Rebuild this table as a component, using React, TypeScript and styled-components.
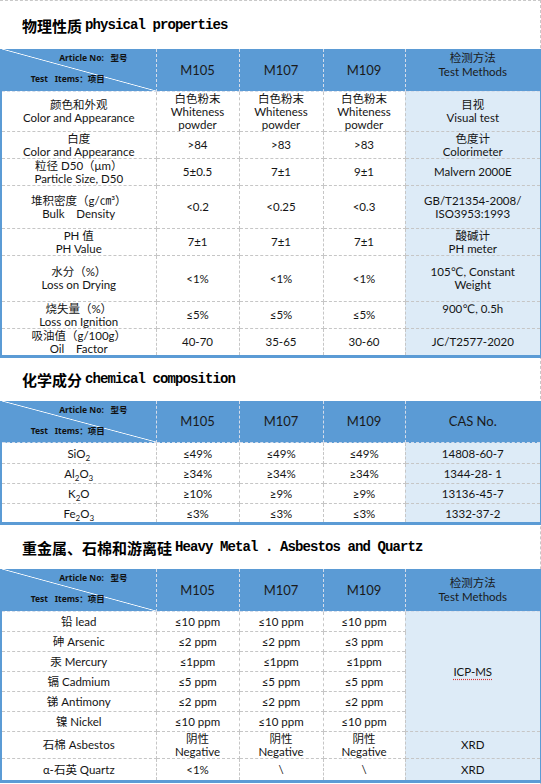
import React from "react";
import styled, { createGlobalStyle } from "styled-components";

const GlobalStyle = createGlobalStyle`
  body {
    margin: 0;
    background: #fff;
    font-family: "Lato", "DejaVu Sans", "Noto Sans CJK SC", sans-serif;
    color: #141414;
  }
  sub {
    font-size: 8px;
    line-height: 0;
    vertical-align: -3px;
  }
`;

const Sheet = styled.div`
  width: 540px;
  min-height: 784px;
  border-top: 1px dashed #c8c8c8;
  border-right: 1px dashed #c8c8c8;
`;

const Title = styled.div<{ $h: number }>`
  height: ${(p) => p.$h}px;
  display: flex;
  align-items: center;
  padding-left: 22px;
  gap: 3px;
  color: #000;
`;

const CnTitle = styled.span`
  font-family: "Noto Sans CJK SC", sans-serif;
  font-weight: 700;
  font-size: 15px;
`;

const EnTitle = styled.span`
  font-family: "Liberation Mono", monospace;
  font-weight: 700;
  font-size: 14px;
  letter-spacing: -0.9px;
  white-space: pre;
`;

const Table = styled.table`
  width: 540px;
  table-layout: fixed;
  border-collapse: collapse;
  border-left: 2px solid #5b9bd5;
  border-right: 2px solid #5b9bd5;
  border-bottom: 3px solid #5b9bd5;
`;

const HeadRow = styled.tr`
  height: 42px;
  background: #5b9bd5;
`;

const HeadCell = styled.th<{ $top?: boolean }>`
  font-weight: 400;
  font-size: 13px;
  color: #1a1a1a;
  border: 1px dashed #d4dcea;
  border-top: none;
  vertical-align: ${(p) => (p.$top ? "top" : "middle")};
  padding: ${(p) => (p.$top ? "2px 0 0" : "0")};
  line-height: 14px;
`;

const MethodHead = styled.span`
  display: block;
  height: 14px;
  font-size: 11.5px;
`;

const DiagCell = styled.th`
  border: 1px dashed #d4dcea;
  border-top: none;
  padding: 0;
  background: linear-gradient(
    to top right,
    transparent calc(50% - 0.8px),
    #ffffff 50%,
    transparent calc(50% + 0.8px)
  );
`;

const DiagInner = styled.div`
  height: 41px;
  box-sizing: border-box;
  display: flex;
  flex-direction: column;
  justify-content: space-between;
  padding: 3px 28px 6px 6px;
  font-family: "Noto Sans", "Noto Sans CJK SC", sans-serif;
  font-size: 8.5px;
  line-height: 11px;
  font-weight: 700;
  color: #111;
  white-space: pre;
`;

const DiagTop = styled.span`
  align-self: flex-end;
  height: 11px;
`;

const DiagBottom = styled.span`
  height: 11px;
`;

const Row = styled.tr<{ $h: number }>`
  height: ${(p) => p.$h}px;
`;

const Cell = styled.td<{ $method?: boolean; $top?: boolean }>`
  border: 1px dashed #c6c6c6;
  background: ${(p) => (p.$method ? "#ddebf7" : "#fff")};
  text-align: center;
  vertical-align: ${(p) => (p.$top ? "top" : "middle")};
  font-size: 11.5px;
  line-height: 13px;
  padding: 0;
  white-space: pre;
`;

const Line = styled.span`
  display: block;
  height: 13px;
`;

const Spell = styled.span`
  text-decoration: underline dotted #e03030;
  text-underline-offset: 3px;
`;

type Text = string | string[];

const Lines = ({ t }: { t: Text }) =>
  Array.isArray(t) ? (
    <>
      {t.map((l, i) => (
        <Line key={i}>{l}</Line>
      ))}
    </>
  ) : (
    <Line>{t}</Line>
  );

const Cols = () => (
  <colgroup>
    <col style={{ width: 155 }} />
    <col style={{ width: 83 }} />
    <col style={{ width: 84 }} />
    <col style={{ width: 82 }} />
    <col style={{ width: 136 }} />
  </colgroup>
);

const Head = ({ method }: { method: React.ReactNode }) => (
  <thead>
    <HeadRow>
      <DiagCell>
        <DiagInner>
          <DiagTop>{"Article No:   型号"}</DiagTop>
          <DiagBottom>{"Test   Items：项目"}</DiagBottom>
        </DiagInner>
      </DiagCell>
      <HeadCell>M105</HeadCell>
      <HeadCell>M107</HeadCell>
      <HeadCell>M109</HeadCell>
      {method}
    </HeadRow>
  </thead>
);

const white = ["白色粉末", "Whiteness", "powder"];

const physical: { label: Text; v: Text[]; m: Text; h: number; top?: boolean }[] = [
  { label: ["颜色和外观", "Color and Appearance"], v: [white, white, white], m: ["目视", "Visual test"], h: 40 },
  { label: ["白度", "Color and Appearance"], v: [">84", ">83", ">83"], m: ["色度计", "Colorimeter"], h: 27 },
  { label: ["粒径 D50（μm）", "Particle Size, D50"], v: ["5±0.5", "7±1", "9±1"], m: "Malvern 2000E", h: 27 },
  { label: ["堆积密度（g/㎝³）", "Bulk    Density"], v: ["<0.2", "<0.25", "<0.3"], m: ["GB/T21354-2008/", "ISO3953:1993"], h: 43 },
  { label: ["PH 值", "PH Value"], v: ["7±1", "7±1", "7±1"], m: ["酸碱计", "PH meter"], h: 27 },
  { label: ["水分（%）", "Loss on Drying"], v: ["<1%", "<1%", "<1%"], m: ["105℃, Constant", "Weight"], h: 46 },
  { label: ["烧失量（%）", "Loss on Ignition"], v: ["≤5%", "≤5%", "≤5%"], m: "900℃, 0.5h", h: 27, top: true },
  { label: ["吸油值（g/100g）", "Oil    Factor"], v: ["40-70", "35-65", "30-60"], m: "JC/T2577-2020", h: 26 },
];

const chemical: { label: React.ReactNode; v: string[]; m: string; h: number }[] = [
  { label: <>SiO<sub>2</sub></>, v: ["≤49%", "≤49%", "≤49%"], m: "14808-60-7", h: 21 },
  { label: <>Al<sub>2</sub>O<sub>3</sub></>, v: ["≥34%", "≥34%", "≥34%"], m: "1344-28- 1", h: 20 },
  { label: <>K<sub>2</sub>O</>, v: ["≥10%", "≥9%", "≥9%"], m: "13136-45-7", h: 20 },
  { label: <>Fe<sub>2</sub>O<sub>3</sub></>, v: ["≤3%", "≤3%", "≤3%"], m: "1332-37-2", h: 20 },
];

const metals: { label: string; v: Text[]; h: number }[] = [
  { label: "铅 lead", v: ["≤10 ppm", "≤10 ppm", "≤10 ppm"], h: 20 },
  { label: "砷 Arsenic", v: ["≤2 ppm", "≤2 ppm", "≤3 ppm"], h: 20 },
  { label: "汞 Mercury", v: ["≤1ppm", "≤1ppm", "≤1ppm"], h: 20 },
  { label: "镉 Cadmium", v: ["≤5 ppm", "≤5 ppm", "≤5 ppm"], h: 20 },
  { label: "锑 Antimony", v: ["≤2 ppm", "≤2 ppm", "≤2 ppm"], h: 20 },
  { label: "镍 Nickel", v: ["≤10 ppm", "≤10 ppm", "≤10 ppm"], h: 20 },
];

export default function App() {
  return (
    <Sheet>
      <GlobalStyle />
      <Title $h={48}>
        <CnTitle>物理性质</CnTitle>
        <EnTitle>physical properties</EnTitle>
      </Title>
      <Table>
        <Cols />
        <Head
          method={
            <HeadCell $top>
              <MethodHead>检测方法</MethodHead>
              <MethodHead>Test Methods</MethodHead>
            </HeadCell>
          }
        />
        <tbody>
          {physical.map((r, i) => (
            <Row key={i} $h={r.h}>
              <Cell>
                <Lines t={r.label} />
              </Cell>
              {r.v.map((v, j) => (
                <Cell key={j}>
                  <Lines t={v} />
                </Cell>
              ))}
              <Cell $method $top={r.top}>
                <Lines t={r.m} />
              </Cell>
            </Row>
          ))}
        </tbody>
      </Table>

      <Title $h={43}>
        <CnTitle>化学成分</CnTitle>
        <EnTitle>chemical composition</EnTitle>
      </Title>
      <Table>
        <Cols />
        <Head method={<HeadCell>CAS No.</HeadCell>} />
        <tbody>
          {chemical.map((r, i) => (
            <Row key={i} $h={r.h}>
              <Cell>
                <Line>{r.label}</Line>
              </Cell>
              {r.v.map((v, j) => (
                <Cell key={j}>
                  <Lines t={v} />
                </Cell>
              ))}
              <Cell $method>
                <Lines t={r.m} />
              </Cell>
            </Row>
          ))}
        </tbody>
      </Table>

      <Title $h={44}>
        <CnTitle>重金属、石棉和游离硅</CnTitle>
        <EnTitle>Heavy Metal . Asbestos and Quartz</EnTitle>
      </Title>
      <Table>
        <Cols />
        <Head
          method={
            <HeadCell>
              <MethodHead>检测方法</MethodHead>
              <MethodHead>Test Methods</MethodHead>
            </HeadCell>
          }
        />
        <tbody>
          {metals.map((r, i) => (
            <Row key={i} $h={r.h}>
              <Cell>
                <Lines t={r.label} />
              </Cell>
              {r.v.map((v, j) => (
                <Cell key={j}>
                  <Lines t={v} />
                </Cell>
              ))}
              {i === 0 && (
                <Cell $method rowSpan={6}>
                  <Spell>ICP-MS</Spell>
                </Cell>
              )}
            </Row>
          ))}
          <Row $h={27}>
            <Cell>
              <Lines t="石棉 Asbestos" />
            </Cell>
            {[0, 1, 2].map((j) => (
              <Cell key={j}>
                <Lines t={["阴性", "Negative"]} />
              </Cell>
            ))}
            <Cell $method>
              <Lines t="XRD" />
            </Cell>
          </Row>
          <Row $h={23}>
            <Cell>
              <Lines t="α-石英 Quartz" />
            </Cell>
            <Cell>
              <Lines t="<1%" />
            </Cell>
            <Cell>
              <Lines t="\" />
            </Cell>
            <Cell>
              <Lines t="\" />
            </Cell>
            <Cell $method>
              <Lines t="XRD" />
            </Cell>
          </Row>
        </tbody>
      </Table>
    </Sheet>
  );
}
